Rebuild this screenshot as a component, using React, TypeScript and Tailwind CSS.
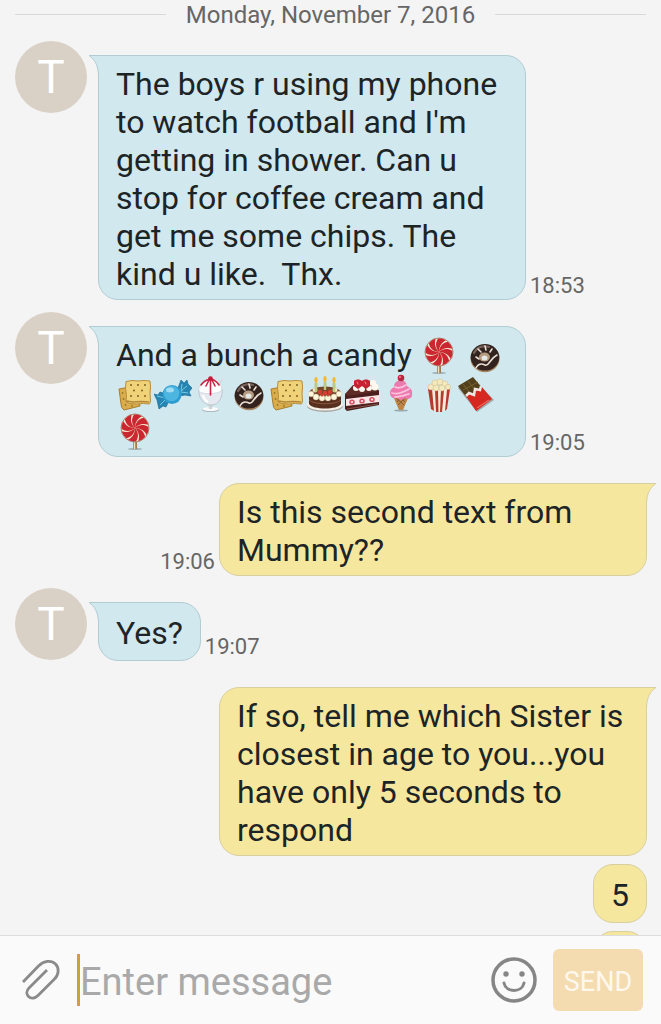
import type { ReactNode } from 'react'
import clsx from 'clsx'

type Treat =
  | 'lollipop'
  | 'donut'
  | 'crackers'
  | 'candy'
  | 'sundae'
  | 'birthday'
  | 'shortcake'
  | 'cone'
  | 'popcorn'
  | 'chocolate'

// All treats are drawn on the same 38 x 38 grid
const treats: Record<Treat, ReactNode> = {
  lollipop: (
    <>
      <ellipse cx="19" cy="37" rx="7" ry="1" fill="#8a9a9c" opacity=".7" />
      <path d="M17 28h4v9h-4z" fill="#9a7a50" />
      <path d="M18.500 28v9" stroke="#f0e2c0" strokeWidth="1.500" />
      <circle cx="19" cy="16" r="14" fill="#f7ead2" stroke="#a58a72" strokeWidth="1" />
      {[0, 45, 90, 135, 180, 225, 270, 315].map((deg) => (
        <path
          key={deg}
          d="M19 16C15.500 12 15 7 18 2.600C21 2.400 24 3 26 4.300C21 7 19 11 19 16Z"
          fill="#cb2731"
          transform={`rotate(${deg} 19 16)`}
        />
      ))}
    </>
  ),
  donut: (
    <>
      <ellipse cx="19" cy="22.500" rx="14.500" ry="13.800" fill="#a98763" />
      <ellipse cx="19" cy="21.300" rx="14.300" ry="13.300" fill="#33231f" />
      <path d="M8 17c3-6 9-8 15-6" stroke="#76625a" strokeWidth="2" fill="none" strokeLinecap="round" />
      <ellipse cx="18.500" cy="21" rx="5.500" ry="4.500" fill="#b59b80" />
      <ellipse cx="18.500" cy="22" rx="3" ry="2.500" fill="#e4e9e6" />
      <path
        d="M10 32c2-4 5-5 9-3s4-6 12-10M10 21l3 2M12 13l3 3M19 10l1 4M26 13l-2 3"
        stroke="#e9dfd5"
        strokeWidth="1.600"
        fill="none"
        strokeLinecap="round"
      />
    </>
  ),
  crackers: (
    <>
      <path d="M3 15l16-3 5 20-16 4q-3-2-3-6z" fill="#d9ac4c" stroke="#a97e2d" />
      <g fill="#7a5a1e">
        <circle cx="6.500" cy="19" r=".8" />
        <circle cx="7.500" cy="25" r=".8" />
        <circle cx="9.500" cy="31" r=".8" />
        <circle cx="16" cy="32" r=".8" />
      </g>
      <path
        d="M10 7.500l6-1 6 .5 6-.5 6 .5.5 6-.5 7 .5 7-1 3-6-.5-7 .5-7-.5-3.500-2 .5-6-1-7z"
        fill="#f0d279"
        stroke="#b78d3b"
        strokeLinejoin="round"
      />
      <path d="M10 27l7 1 8-.5 8 .5" stroke="#b38735" strokeWidth="1.500" fill="none" />
      <g fill="#80601f">
        <circle cx="15" cy="11" r="1" />
        <circle cx="22" cy="11" r="1" />
        <circle cx="29" cy="11" r="1" />
        <circle cx="18" cy="16.500" r="1" />
        <circle cx="26" cy="16.500" r="1" />
        <circle cx="15" cy="22" r="1" />
        <circle cx="22" cy="22" r="1" />
        <circle cx="29" cy="22" r="1" />
      </g>
    </>
  ),
  candy: (
    <>
      <path
        d="M12 20L6 18l-2 3-4-1 3 6 2 9 4-3 3 1 3-6zM24 14l3-8 3 3 3-3 1 4 4 4-3 4 2 4-6-1-5 1z"
        fill="#2686b3"
        stroke="#206f98"
        strokeWidth=".7"
      />
      <path d="M3 22l8 2M6 31l5-5M28 10l-1 7M33 12l-6 5M34 19l-7-1" stroke="#79c8e4" fill="none" />
      <circle cx="18" cy="20.500" r="9.500" fill="#2c9bcf" />
      <circle cx="17.500" cy="19.500" r="7.800" fill="#4cb5e0" />
      <ellipse cx="16" cy="16" rx="4" ry="2.500" fill="#9fdcf2" />
    </>
  ),
  sundae: (
    <>
      <path d="M25 14l5-8" stroke="#d8dadd" strokeWidth="2" strokeLinecap="round" />
      <ellipse cx="18.500" cy="36" rx="8.500" ry="2" fill="#adb8bf" />
      <ellipse cx="18.500" cy="35" rx="8" ry="2" fill="#f8fafb" />
      <path d="M16 28h5l-1 7h-3z" fill="#cdd5da" />
      <path d="M7 15h23c1 8-3 16-11 16S6 23 7 15z" fill="#e5eaf0" stroke="#b5bec7" strokeWidth=".8" />
      <path
        d="M7 17c-1-4 2-6 4-7 2-4 5-5 8-5s6 2 7 5c3 1 5 4 3 7-3 3-19 4-22 0z"
        fill="#fff"
        stroke="#c9cfd7"
        strokeWidth=".7"
      />
      <path
        d="M18 5c-4 1-7 3-9 6M18.500 4v17M19 5c4 1 6 3 8 6M17 6l-3 6M20 6l3 6"
        stroke="#c82744"
        strokeWidth="1.600"
        fill="none"
        strokeLinecap="round"
      />
      <circle cx="18.500" cy="4.500" r="2.300" fill="#bd1d39" />
      <path d="M11 21c1 4 3 6 5 7" stroke="#fff" strokeWidth="2" fill="none" />
    </>
  ),
  birthday: (
    <>
      <ellipse cx="19" cy="32" rx="18" ry="6" fill="#a7a39e" />
      <ellipse cx="19" cy="31" rx="18" ry="5.500" fill="#f5f1e9" />
      <path d="M3 19v11c3 6 29 6 32 0V19z" fill="#58301f" />
      <path d="M3 26c5 5 27 5 32 0" stroke="#8a573c" fill="none" />
      <ellipse cx="19" cy="19" rx="16" ry="6.500" fill="#74462d" />
      <g fill="#fff6dc" stroke="#d6c6a1" strokeWidth=".4">
        <circle cx="5" cy="20" r="2.800" />
        <circle cx="10" cy="23" r="2.900" />
        <circle cx="16" cy="24" r="2.900" />
        <circle cx="22" cy="24" r="2.900" />
        <circle cx="28" cy="23" r="2.900" />
        <circle cx="33" cy="20" r="2.800" />
        <circle cx="9" cy="16" r="2.300" />
        <circle cx="29" cy="16" r="2.300" />
      </g>
      <path d="M10 9v9M19 8v8M28 9v9" stroke="#8dac58" strokeWidth="2.500" />
      <path d="M10 9v9M19 8v8M28 9v9" stroke="#f2e7a4" />
      <g fill="#d33f31">
        <circle cx="14" cy="18" r="2.200" />
        <circle cx="19" cy="19" r="2.200" />
        <circle cx="24" cy="18" r="2.200" />
        <circle cx="16" cy="21" r="1.500" />
        <circle cx="22" cy="21" r="1.500" />
      </g>
      <g fill="#f5b72f">
        <ellipse cx="10" cy="6" rx="1.600" ry="3" />
        <ellipse cx="19" cy="5" rx="1.600" ry="3" />
        <ellipse cx="28" cy="6" rx="1.600" ry="3" />
      </g>
    </>
  ),
  shortcake: (
    <>
      <path d="M1 20l32-5 2 2v14L3 37l-2-2z" fill="#4a1f1c" />
      <path d="M1 20L9 11l22 0 4 6-31 5z" fill="#5e2c25" />
      <path d="M2 25l33-4v7L2 32z" fill="#fbe7e8" />
      <g fill="none" stroke="#d7576a" strokeWidth="1.600">
        <ellipse cx="8" cy="28" rx="2" ry="1.800" />
        <ellipse cx="18" cy="27" rx="2" ry="1.800" />
        <ellipse cx="28" cy="25.500" rx="2" ry="1.800" />
      </g>
      <path d="M3 35l31-5" stroke="#87504a" />
      <g fill="#fff8ef">
        <circle cx="12" cy="14" r="3" />
        <circle cx="18" cy="15" r="3" />
        <circle cx="25" cy="14" r="3" />
        <circle cx="31" cy="13" r="3.500" />
        <circle cx="29" cy="9" r="3" />
      </g>
      <path d="M10 7c2-2 6-2 8 0l0 5-4 3-4-3zM18 7c2-2 6-2 8 0l0 5-4 3-4-3z" fill="#c82232" />
      <path d="M13 8l1 2M21 8l1 2" stroke="#f08a87" strokeLinecap="round" />
    </>
  ),
  cone: (
    <>
      <ellipse cx="19" cy="36.500" rx="7" ry="1" fill="#819396" opacity=".7" />
      <path d="M11 22h16l-6 14h-4z" fill="#bd8548" />
      <path d="M14 24l8 7M18 23l5 5M24 23l-8 8M19 23l-4 5" stroke="#7d5128" strokeWidth=".8" />
      <path
        d="M8 19c0-4 3-5 4-6 0-5 4-7 7-7s6 3 6 6c3 2 6 4 5 8 1 4-4 6-7 4-3 3-6 2-8 0-4 1-7-1-7-5z"
        fill="#ed79af"
      />
      <path
        d="M13 13c4 2 8 0 11-2M10 19c6 2 12-1 17-4M13 23c5 0 10-2 14-3"
        stroke="#fbc3dc"
        strokeWidth="1.800"
        fill="none"
        strokeLinecap="round"
      />
      <circle cx="19" cy="4" r="3.300" fill="#b92942" />
      <circle cx="18" cy="3" r="1" fill="#ef8695" />
    </>
  ),
  popcorn: (
    <>
      <path d="M8 15h22l-3 20c-3 3-13 3-16 0z" fill="#f8ecdc" />
      <path d="M8 15h4l2 22-3-2zM15 16h3l.5 22h-2.500zM21 16h3l-2 22h-2zM27 15h3l-3 20-2 2z" fill="#b33a2c" />
      <g fill="#f4e9bf" stroke="#cdbc82" strokeWidth=".5">
        <circle cx="11" cy="13" r="3" />
        <circle cx="15" cy="9" r="3" />
        <circle cx="20" cy="8" r="3" />
        <circle cx="25" cy="10" r="3" />
        <circle cx="28" cy="13" r="2.600" />
        <circle cx="16" cy="14" r="3" />
        <circle cx="22" cy="14" r="3" />
      </g>
    </>
  ),
  chocolate: (
    <>
      <path d="M0 14L15 4l21 22-17 12z" fill="#9fa9a6" />
      <path d="M0 12L15 3l10 12L9 24z" fill="#52401d" />
      <path d="M5 16l15-8M10 7l8 10M5 10l8 10" stroke="#75602f" />
      <path d="M8 22l3-3 4 0 2-4 5 1 1-4L34 25 18 37z" fill="#d52820" />
      <path d="M8 22l3-3 5 2 1-6 5 1 1-4" stroke="#f1e6e3" strokeWidth="2.500" fill="none" />
      <path d="M19 34l12-8" stroke="#ee6258" strokeWidth="1.500" />
    </>
  ),
}

const secondRow: Treat[] = [
  'crackers',
  'candy',
  'sundae',
  'donut',
  'crackers',
  'birthday',
  'shortcake',
  'cone',
  'popcorn',
  'chocolate',
  'lollipop',
]

const longText =
  "The boys r using my phone to watch football and I'm getting in shower. Can u stop for coffee cream and get me some chips. The kind u like.  Thx."

function TreatIcon({ name }: { name: Treat }) {
  return (
    <svg viewBox="0 0 38 38" className="inline-block h-[38px] w-[38px] align-top" role="img" aria-label={name}>
      {treats[name]}
    </svg>
  )
}

function Avatar() {
  return (
    <div className="mr-[11px] flex h-[72px] w-[72px] shrink-0 items-center justify-center rounded-full bg-[#d9d1c6] text-[46px] text-white">
      T
    </div>
  )
}

// The small horn at the top corner of a bubble
function Tail({ own }: { own: boolean }) {
  return (
    <svg
      viewBox="0 0 12 20"
      aria-hidden="true"
      className={clsx('absolute -top-px h-5 w-3', own ? '-right-[10px] -scale-x-100' : '-left-[10px]')}
    >
      <path d="M0 .5C5 4 9 9 9.500 20H12V.5Z" fill={own ? '#f5e79e' : '#d0e8ee'} />
      <path d="M12 .5H0C5 4 9 9 9.500 20" fill="none" stroke={own ? '#d9cf9f' : '#b0cdd4'} />
    </svg>
  )
}

type MessageProps = {
  own?: boolean
  tail?: boolean
  time?: string
  children?: ReactNode
}

function Message({ own = false, tail = true, time, children }: MessageProps) {
  return (
    <li
      className={clsx(
        'flex shrink-0',
        own ? 'flex-row-reverse pr-[14px]' : 'mt-3 pl-[15px]',
        own && (tail ? 'mt-[26px]' : 'mt-2'),
      )}
    >
      {!own && <Avatar />}
      <div
        className={clsx(
          'relative flex min-h-[59px] max-w-[428px] min-w-[54px] items-center rounded-[20px] border px-[17px] pt-[9px] pb-[6px] text-[32px] leading-[38px] text-[#1d2426]',
          own ? 'border-[#d9cf9f] bg-[#f5e79e]' : 'mt-[14px] border-[#b0cdd4] bg-[#d0e8ee]',
          tail && (own ? 'rounded-tr-none' : 'rounded-tl-none'),
        )}
      >
        {tail && <Tail own={own} />}
        <p className="whitespace-pre-wrap">{children}</p>
      </div>
      {time && <time className="mx-1 self-end text-[22px] leading-7 text-[#666666]">{time}</time>}
    </li>
  )
}

export default function App() {
  return (
    <div className="flex h-screen flex-col bg-[#f4f4f4] font-[Roboto,sans-serif]">
      <main className="flex min-h-0 flex-1 flex-col overflow-hidden">
        <div className="flex h-[29px] shrink-0 items-center gap-5 px-[15px]">
          <span className="h-px flex-1 bg-[#d9d9d9]" />
          <h1 className="text-[24px] leading-7 text-[#666666]">Monday, November 7, 2016</h1>
          <span className="h-px flex-1 bg-[#d9d9d9]" />
        </div>

        <ol className="flex flex-col">
          <Message time="18:53">{longText}</Message>
          <Message time="19:05">
            And a bunch a candy <TreatIcon name="lollipop" /> <TreatIcon name="donut" />
            {secondRow.map((name, i) => (
              <TreatIcon key={i} name={name} />
            ))}
          </Message>
          <Message own time="19:06">
            Is this second text from Mummy??
          </Message>
          <Message time="19:07">Yes?</Message>
          <Message own>
            If so, tell me which Sister is closest in age to you...you have only 5 seconds to respond
          </Message>
          <Message own tail={false}>
            5
          </Message>
          <Message own tail={false} />
        </ol>
      </main>

      <form
        className="flex h-[89px] shrink-0 items-center border-t border-[#dcdcdc] bg-[#fafafa] pr-[18px] pl-5"
        onSubmit={(e) => e.preventDefault()}
      >
        <button type="button" aria-label="Attach" className="mr-4 shrink-0">
          <svg viewBox="0 0 41 44" className="h-11 w-[41px]" fill="none" stroke="#8a8a8a" strokeWidth="2.800">
            <path d="M3 24L18.500 8C24 2.500 31.500 2 35.500 6C39.500 10 39 17 34 21.500L18 37.500C15 40.500 11 41 8.500 38.500C6 36 6.500 32.500 9 30L27 12" />
          </svg>
        </button>
        {/* caret of the focused field */}
        <span className="h-[52px] w-[3px] shrink-0 bg-[#cf9f3a]" />
        <input
          type="text"
          aria-label="Enter message"
          placeholder="Enter message"
          className="h-[52px] min-w-0 flex-1 pt-1 text-[38px] text-[#1d2426] outline-none placeholder:text-[#a9a9a9]"
        />
        <button type="button" aria-label="Emoji" className="mr-4 shrink-0">
          <svg viewBox="0 0 46 46" className="h-[46px] w-[46px]" fill="none" stroke="#868686" strokeWidth="3.500">
            <circle cx="23" cy="23" r="21" />
            <path d="M13 26C15 36 31 36 33 26" strokeWidth="3" strokeLinecap="round" />
            <circle cx="15" cy="17" r="2.700" fill="#868686" stroke="none" />
            <circle cx="31" cy="17" r="2.700" fill="#868686" stroke="none" />
          </svg>
        </button>
        <button
          type="submit"
          className="h-[62px] w-[90px] shrink-0 rounded-md bg-[#f4dcb0] pt-1 text-[27px] text-[#fdf8ee]"
        >
          SEND
        </button>
      </form>
    </div>
  )
}
